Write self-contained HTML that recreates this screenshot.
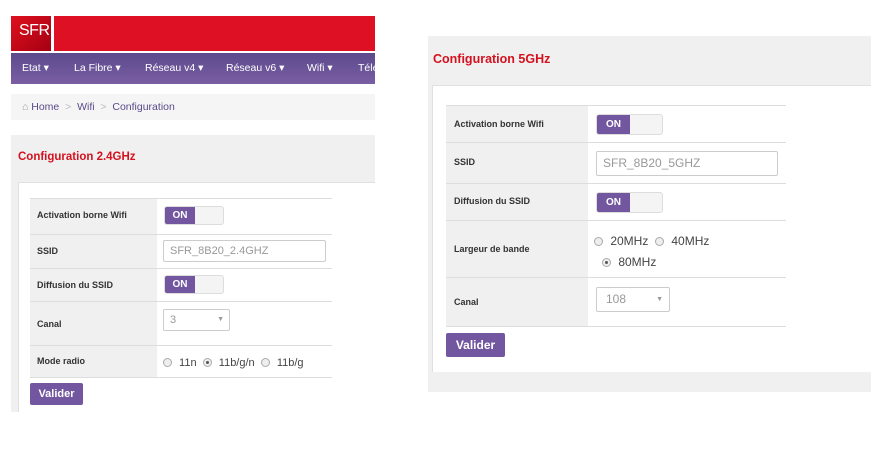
<!DOCTYPE html>
<html><head><meta charset="utf-8"><style>
*{margin:0;padding:0;box-sizing:border-box}
body{width:880px;height:452px;background:#fff;font-family:"Liberation Sans",sans-serif;position:relative;overflow:hidden}
.a{position:absolute}
.lbl{font-weight:bold;font-size:9px;color:#333}
.row{position:absolute;border-top:1px solid #ddd}
.lc{position:absolute;left:0;top:0;bottom:0;background:#f0f0f0}
.tog{position:absolute;width:60px;height:19px;border:1px solid #ddd;border-radius:3px;background:#f4f4f4;overflow:hidden}
.tog span{position:absolute;left:0;top:0;bottom:0;width:30px;background:#7257a0;color:#fff;font-size:10px;font-weight:bold;text-align:center;line-height:18px}
.inp{position:absolute;border:1px solid #ccc;border-radius:2px;background:#fff;color:#999;font-size:11px;padding-left:6px}
.btn{position:absolute;background:#7257a0;color:#fff;font-weight:bold;font-size:11px;text-align:center;border-radius:2px}
.rad{display:inline-block;width:9px;height:9px;border:1px solid #aaa;border-radius:50%;background:#eee;vertical-align:-1px;position:relative;margin-right:4px}
.rad.on:after{content:"";position:absolute;left:2px;top:2px;width:3px;height:3px;border-radius:50%;background:#555}
.nav span{position:absolute;top:0}
</style></head><body>
<!-- left -->
<div class="a" style="left:11px;top:16px;width:364px;height:35px;background:#dd1024"></div>
<div class="a" style="left:11px;top:16px;width:40px;height:35px;background:linear-gradient(135deg,#e0101e,#a40012);color:#fff;font-size:16px;line-height:30px;padding-left:8px;letter-spacing:-0.5px">SFR</div>
<div class="a" style="left:51px;top:16px;width:3px;height:35px;background:#fff"></div>
<div class="a" style="left:11px;top:51px;width:364px;height:2px;background:#fff"></div>
<div class="a nav" style="left:11px;top:53px;width:364px;height:31px;background:linear-gradient(#5b4a8c,#7a5ea4);color:#fff;font-size:10.5px;line-height:31px;white-space:nowrap;overflow:hidden"><span style="left:11px">Etat ▾</span><span style="left:63px">La Fibre ▾</span><span style="left:134px">Réseau v4 ▾</span><span style="left:215px">Réseau v6 ▾</span><span style="left:296px">Wifi ▾</span><span style="left:347px">Télé</span></div>
<div class="a" style="left:11px;top:94px;width:364px;height:26px;background:#f5f5f5;font-size:10.5px;line-height:26px;padding-left:11px;color:#5a4a8a"><span style="color:#999">⌂</span> Home <span style="color:#bbb">&nbsp;&gt;&nbsp;</span> Wifi <span style="color:#bbb">&nbsp;&gt;&nbsp;</span> Configuration</div>
<div class="a" style="left:11px;top:135px;width:364px;height:277px;background:#f0f0f0"></div>
<div class="a" style="left:18px;top:151px;color:#d4111e;font-weight:bold;font-size:11.5px">Configuration 2.4GHz</div>
<div class="a" style="left:18px;top:182px;width:357px;height:230px;background:#fff;border-left:1px solid #e0e0e0;border-top:1px solid #e0e0e0"></div>
<div class="row" style="left:30px;top:198px;width:302px;height:36px"><div class="lc" style="width:127px"></div><div class="a lbl" style="left:7px;top:11px">Activation borne Wifi</div><div class="tog" style="left:134px;top:7px"><span>ON</span></div></div>
<div class="row" style="left:30px;top:234px;width:302px;height:34px"><div class="lc" style="width:127px"></div><div class="a lbl" style="left:7px;top:11px">SSID</div><div class="inp" style="left:133px;top:5px;width:163px;height:22px;line-height:20px">SFR_8B20_2.4GHZ</div></div>
<div class="row" style="left:30px;top:268px;width:302px;height:33px"><div class="lc" style="width:127px"></div><div class="a lbl" style="left:7px;top:11px">Diffusion du SSID</div><div class="tog" style="left:134px;top:6px"><span>ON</span></div></div>
<div class="row" style="left:30px;top:301px;width:302px;height:44px"><div class="lc" style="width:127px"></div><div class="a lbl" style="left:7px;top:17px">Canal</div><div class="inp" style="left:133px;top:7px;width:67px;height:22px;line-height:20px">3<span style="position:absolute;right:5px;font-size:7px">▼</span></div></div>
<div class="row" style="left:30px;top:345px;width:302px;height:33px;border-bottom:1px solid #ddd"><div class="lc" style="width:127px"></div><div class="a lbl" style="left:7px;top:10px">Mode radio</div><div class="a" style="left:133px;top:11px;font-size:11px;color:#444;white-space:nowrap"><span class="rad"></span> 11n &nbsp;<span class="rad on"></span> 11b/g/n &nbsp;<span class="rad"></span> 11b/g</div></div>
<div class="btn" style="left:30px;top:383px;width:53px;height:22px;line-height:22px">Valider</div>
<!-- right -->
<div class="a" style="left:428px;top:36px;width:443px;height:356px;background:#f0f0f0"></div>
<div class="a" style="left:433px;top:52px;color:#d4111e;font-weight:bold;font-size:12.5px">Configuration 5GHz</div>
<div class="a" style="left:432px;top:85px;width:439px;height:287px;background:#fff;border-left:1px solid #e0e0e0;border-top:1px solid #e0e0e0"></div>
<div class="row" style="left:446px;top:105px;width:340px;height:37px"><div class="lc" style="width:142px"></div><div class="a lbl" style="left:8px;top:13px">Activation borne Wifi</div><div class="tog" style="left:150px;top:8px;width:67px;height:21px"><span style="width:33px;line-height:20px">ON</span></div></div>
<div class="row" style="left:446px;top:142px;width:340px;height:41px"><div class="lc" style="width:142px"></div><div class="a lbl" style="left:8px;top:14px">SSID</div><div class="inp" style="left:150px;top:8px;width:182px;height:25px;line-height:23px;font-size:12px">SFR_8B20_5GHZ</div></div>
<div class="row" style="left:446px;top:183px;width:340px;height:37px"><div class="lc" style="width:142px"></div><div class="a lbl" style="left:8px;top:12px">Diffusion du SSID</div><div class="tog" style="left:150px;top:8px;width:67px;height:21px"><span style="width:33px;line-height:20px">ON</span></div></div>
<div class="row" style="left:446px;top:220px;width:340px;height:57px"><div class="lc" style="width:142px"></div><div class="a lbl" style="left:8px;top:23px">Largeur de bande</div><div class="a" style="left:148px;top:13px;font-size:12px;color:#444;white-space:nowrap"><span class="rad"></span> 20MHz &nbsp;<span class="rad"></span> 40MHz</div><div class="a" style="left:156px;top:34px;font-size:12px;color:#444"><span class="rad on"></span> 80MHz</div></div>
<div class="row" style="left:446px;top:277px;width:340px;height:50px;border-bottom:1px solid #ddd"><div class="lc" style="width:142px"></div><div class="a lbl" style="left:8px;top:19px">Canal</div><div class="inp" style="left:150px;top:9px;width:74px;height:25px;line-height:23px;font-size:12px;padding-left:9px">108<span style="position:absolute;right:6px;font-size:7px">▼</span></div></div>
<div class="btn" style="left:446px;top:333px;width:59px;height:24px;line-height:24px;font-size:12px">Valider</div>
</body></html>
